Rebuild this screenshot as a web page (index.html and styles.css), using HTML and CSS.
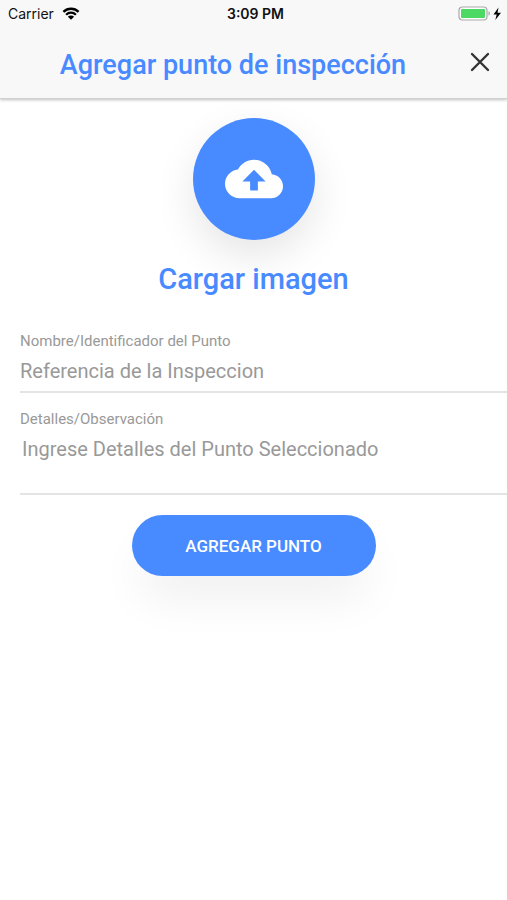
FILE: index.html
```html
<!DOCTYPE html>
<html lang="es">
<head>
    <meta charset="UTF-8">
    <meta name="viewport" content="width=device-width, initial-scale=1.0">
    <title>Agregar punto de inspección</title>
    <link rel="stylesheet" href="styles.css">
</head>
<body>
    <header class="header">
        <div class="status-bar">
            <div class="status-left">
                <span>Carrier</span>
                <svg class="wifi" viewBox="0 0 18 13" aria-hidden="true">
                    <path d="M1.4 4.9a10.8 10.8 0 0 1 15.2 0M4.1 7.7a7 7 0 0 1 9.8 0" fill="none" stroke="#000" stroke-width="2.3"/>
                    <path d="M5.9 9.7a4.4 4.4 0 0 1 6.2 0L9 12.8z" fill="#000"/>
                </svg>
            </div>
            <span class="status-time">3:09 PM</span>
            <div class="status-right">
                <svg class="battery" viewBox="0 0 45 16" aria-hidden="true">
                    <rect x="1" y="1" width="28" height="13" rx="3.5" fill="#fff" stroke="#a9a9a9" stroke-width="1.2"/>
                    <rect x="3" y="3" width="24" height="9" rx="1" fill="#4cd964"/>
                    <path d="M30.5 5.3c1.9.6 1.9 3.8 0 4.4z" fill="#a9a9a9"/>
                    <path d="M40.5 1.5L35.5 8.4h3.2L37.3 14l5.7-7.2h-3.5z" fill="#000"/>
                </svg>
            </div>
        </div>
        <div class="toolbar">
            <h1>Agregar punto de inspección</h1>
            <button type="button" class="close" aria-label="Cerrar">
                <svg viewBox="0 0 20 20" aria-hidden="true">
                    <path d="M2 2l16 16M18 2L2 18" stroke="#333" stroke-width="2.4" stroke-linecap="round"/>
                </svg>
            </button>
        </div>
    </header>

    <main>
        <div class="upload">
            <button type="button" class="upload-button" aria-labelledby="uploadTitle">
                <svg viewBox="0 0 24 24" aria-hidden="true">
                    <path d="M19.35 10.04C18.67 6.59 15.64 4 12 4 9.11 4 6.6 5.64 5.35 8.04 2.34 8.36 0 10.91 0 14c0 3.31 2.69 6 6 6h13c2.76 0 5-2.24 5-5 0-2.64-2.05-4.78-4.65-4.96zM13.6 13v3.8h-3.2V13H7.2L12 8.2l4.8 4.8z" fill="#fff"/>
                </svg>
            </button>
            <h2 id="uploadTitle">Cargar imagen</h2>
        </div>

        <form>
            <div class="fields">
                <div class="field">
                    <label for="nombre">Nombre/Identificador del Punto</label>
                    <input type="text" id="nombre" placeholder="Referencia de la Inspeccion">
                </div>
                <div class="field">
                    <label for="detalles">Detalles/Observación</label>
                    <textarea id="detalles" rows="2" placeholder="Ingrese Detalles del Punto Seleccionado"></textarea>
                </div>
            </div>
            <button type="submit" class="submit">AGREGAR PUNTO</button>
        </form>
    </main>
</body>
</html>
```

FILE: styles.css
```css
* {
    box-sizing: border-box;
}
body {
    margin: 0;
    min-height: 100vh;
    background-color: #fff;
    font-family: Roboto, "Liberation Sans", sans-serif;
}
h1, h2 {
    margin: 0;
    color: #488aff;
    font-weight: 500;
}
button {
    padding: 0;
    border: none;
    font-family: inherit;
    cursor: pointer;
}
svg {
    display: block;
}

/* header */
.header {
    background-color: #f8f8f8;
    border-bottom: 1px solid #d0d0d0;
    box-shadow: 0 1px 3px rgba(0, 0, 0, 0.25);
}
.status-bar {
    display: grid;
    grid-template-columns: 1fr auto 1fr;
    align-items: center;
    height: 27px;
    padding: 0 4px 0 8px;
    font-family: Inter, sans-serif;
    font-size: 14px;
    color: #111;
}
.status-left {
    display: flex;
    align-items: center;
    gap: 8px;
}
.wifi {
    width: 18px;
    height: 13px;
}
.status-time {
    font-weight: 600;
}
.status-right {
    display: flex;
    justify-content: flex-end;
}
.battery {
    width: 45px;
    height: 16px;
}
.toolbar {
    display: flex;
    align-items: flex-start;
    height: 71px;
    padding: 22px 17px 0 0;
}
.toolbar h1 {
    flex: 1;
    padding-right: 4px;
    font-size: 27px;
    line-height: 32px;
    text-align: center;
}
.close {
    margin-top: 3px;
    background: none;
}
.close svg {
    width: 20px;
    height: 20px;
}

/* image upload */
.upload {
    display: flex;
    flex-direction: column;
    align-items: center;
    gap: 21px;
    padding-top: 19px;
}
.upload-button {
    display: flex;
    align-items: center;
    justify-content: center;
    width: 122px;
    height: 122px;
    border-radius: 50%;
    background-color: #488aff;
    box-shadow: 0 16px 40px rgba(0, 0, 0, 0.1);
}
.upload-button svg {
    width: 58px;
    height: 58px;
}
.upload h2 {
    font-size: 29px;
    line-height: 36px;
}

/* form */
.fields {
    padding: 34px 0 0 20px;
}
.field {
    margin-bottom: 16px;
    border-bottom: 2px solid #e4e4e4;
}
.field label {
    display: block;
    font-size: 15px;
    line-height: 20px;
    color: #999;
}
.field input, .field textarea {
    display: block;
    width: 100%;
    margin: 0;
    padding: 8px 0;
    border: none;
    outline: none;
    background: none;
    font-family: inherit;
    font-size: 20px;
    line-height: 24px;
    color: #333;
}
.field textarea {
    padding: 8px 2px;
    resize: none;
}
.field ::placeholder {
    color: #999;
    opacity: 1;
}
.submit {
    display: block;
    width: 244px;
    height: 61px;
    margin: 20px auto 60px;
    border-radius: 31px;
    background-color: #488aff;
    box-shadow: 0 28px 48px -8px rgba(0, 0, 0, 0.07);
    font-size: 17px;
    font-weight: 500;
    color: #fff;
}
```
